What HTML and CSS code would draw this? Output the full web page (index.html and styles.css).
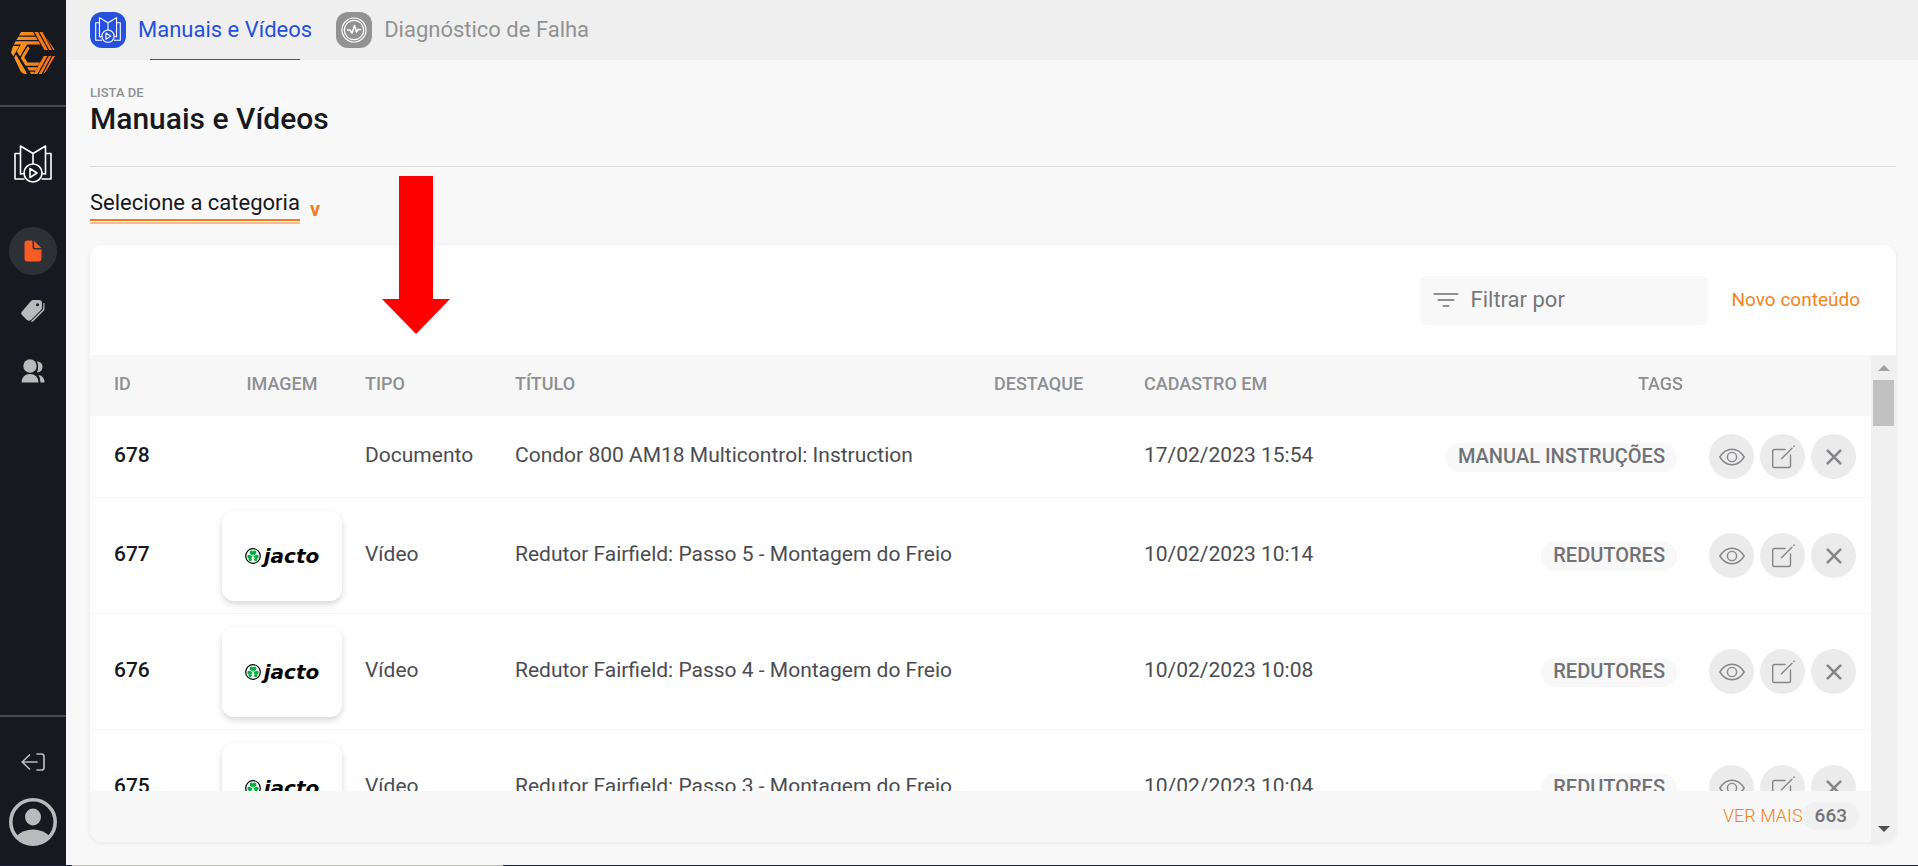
FILE: index.html
```html
<!DOCTYPE html>
<html lang="pt-BR">
<head>
<meta charset="utf-8">
<meta name="viewport" content="width=device-width, initial-scale=1">
<title>Manuais e Vídeos</title>
<link rel="stylesheet" href="styles.css">
</head>
<body>
<svg class="sprite" aria-hidden="true">
  <symbol id="book" viewBox="0 0 38 38" fill="none" stroke="currentColor" stroke-width="1.6" stroke-linejoin="round">
    <path d="M10.500 34H1V8.500H6.500M27.500 34H37V8.500H31.500M11 28.500C9 28.500 7.500 28.800 6.500 29V1L19 8.500L31.500 1V29C30 28.600 28.500 28.500 27.500 28.500M19 8.500V19"/>
    <circle cx="19" cy="28" r="9"/><path d="M16 23.500V32.500L23 28Z"/>
  </symbol>
  <symbol id="eye" viewBox="0 0 26 26" fill="none" stroke="currentColor" stroke-width="1.4">
    <path d="M.8 13C4 8 8 5.300 13 5.300S22 8 25.200 13C22 18 18 20.700 13 20.700S4 18 .8 13Z" stroke-linejoin="round"/><circle cx="13" cy="13" r="4.600"/>
  </symbol>
  <symbol id="edit" viewBox="0 0 26 26" fill="none" stroke="currentColor" stroke-width="1.400" stroke-linecap="round">
    <path d="M15 5.500H4.500Q2.700 5.500 2.700 7.300V21.700Q2.700 23.500 4.500 23.500H18.700Q20.500 23.500 20.500 21.700V11"/><path d="M11.500 14.800L22 4.300M23.900 2.400L24.200 2.100"/>
  </symbol>
  <symbol id="close" viewBox="0 0 26 26" fill="none" stroke="currentColor" stroke-width="2.600" stroke-linecap="round">
    <path d="M6.700 6.700L19.300 19.300M19.300 6.700L6.700 19.300"/>
  </symbol>
  <symbol id="clover" viewBox="0 0 16 16">
    <circle cx="8" cy="8" r="7.300" fill="#fff" stroke="#000" stroke-width="1.200"/>
    <path fill="#00b140" d="M8 8L4.600 5.600Q4.300 2.600 6.400 2.600Q8 2.600 8 3.800Q8 2.600 9.600 2.600Q11.700 2.600 11.400 5.600ZM7.600 8.200L6.800 12.400Q4.500 13.800 3.600 12Q3.400 10.800 4 10.600Q2.200 10.200 2.400 8Q2.800 6.200 5 7ZM8.400 8.200L9.200 12.400Q11.500 13.800 12.400 12Q12.600 10.800 12 10.600Q13.800 10.200 13.600 8Q13.200 6.200 11 7Z"/>
    <path d="M8 6.500V9.500M8 8L6.500 11M8 8L9.500 11" stroke="#fff" stroke-width=".7"/>
  </symbol>
</svg>
<div class="app">
  <aside class="sidebar">
    <a class="brand" href="#" aria-label="Início">
      <svg width="44" height="42" viewBox="0 0 44 42">
        <defs><linearGradient id="amber" gradientUnits="userSpaceOnUse" x1="0" y1="0" x2="44" y2="0"><stop offset="0" stop-color="#ff9a22"/><stop offset="1" stop-color="#f26a12"/></linearGradient></defs>
        <path fill="url(#amber)" d="M10 0H22L24 3.400H8ZM7.300 4.700H24.800L26.700 8H5.400ZM4.700 9.300H27.500L29.400 12.600H16L9 24.500L5.800 19.500L9.900 12.600H2.800ZM23.400 0H27L37 18H33.400ZM28.400 0H31.500L41 18H38.200ZM32.800 1.500L35 5.300L44 18H42.200ZM2 14H8.400L2.300 24.300L0 20.700ZM3.200 25.800L5 22.500L14.600 39L16 42H13L10 40ZM9.800 26L11.600 22.800L16.500 30.500H29L27.200 33.800H14.600ZM16 35.200H26.400L24.500 38.500H18ZM18.700 39.800H23.700L22.500 42H20ZM17 14L18.500 16.500L12.600 26.500L10.800 23.800ZM32.800 24H36.400L26.400 42H22.800ZM37.700 24H40.300L30.600 42H27.700ZM41.600 24H44L34.500 40L32 42Z"/>
      </svg>
    </a>
    <a class="module" href="#" aria-label="Manuais e Vídeos"><svg width="38" height="38"><use href="#book"/></svg></a>
    <nav class="side-nav" aria-label="Seções">
      <a class="side-link side-link-active" href="#" aria-label="Conteúdos">
        <svg width="24" height="24" viewBox="0 0 24 24" fill="currentColor"><path d="M6.500 1.500H11.500V8Q11.500 10.500 14 10.500H20.500V19.500Q20.500 22.500 17.500 22.500H6.500Q3.500 22.500 3.500 19.500V4.500Q3.500 1.500 6.500 1.500ZM13 1.800L20.300 9H14Q13 9 13 8Z"/></svg>
      </a>
      <a class="side-link" href="#" aria-label="Tags">
        <svg width="24" height="24" viewBox="0 0 24 24" fill="currentColor"><path fill-rule="evenodd" d="M12 1H18Q21 1 21 4V8.500Q21 10 20 11L10 21Q8 22.500 6 21L1 16Q-.5 14 1 12.500L10 2Q11 1 12 1ZM16.500 4.200A1.500 1.500 0 1 0 16.500 7.200A1.500 1.500 0 1 0 16.500 4.200Z"/><path d="M22.300 4H23.500V9.500Q23.500 11 22.500 12L12 22.500L10.500 23L10 22.300L21.400 11Q22.300 10 22.300 8.500Z"/></svg>
      </a>
      <a class="side-link" href="#" aria-label="Usuários">
        <svg width="24" height="24" viewBox="0 0 24 24" fill="currentColor"><circle cx="9" cy="7" r="6.700"/><path d="M.5 23.500Q1 15 9 15T17.500 23.500ZM16 2.200Q21.500 3 21.500 8T15.800 13.500Q18.500 8.500 16 2.200ZM17.500 16Q23.500 17 23.500 23.500H19.500Q19.500 19 17.500 16Z"/></svg>
      </a>
    </nav>
    <div class="account">
      <a class="side-link" href="#" aria-label="Sair">
        <svg width="24" height="24" viewBox="0 0 24 24" fill="none" stroke="currentColor" stroke-width="1.700" stroke-linecap="round" stroke-linejoin="round"><path d="M16 12H1.200M8.500 5L1.200 12L8.500 19M16 4H20.500Q23 4 23 6.500V17.500Q23 20 20.500 20H16"/></svg>
      </a>
      <a class="avatar" href="#" aria-label="Perfil">
        <svg width="48" height="48" viewBox="0 0 48 48"><circle cx="24" cy="24" r="22.200" fill="none" stroke="currentColor" stroke-width="3.600"/><ellipse cx="24" cy="19" rx="8" ry="8.500" fill="currentColor"/><path fill="currentColor" d="M7.500 38Q14 31.500 24 31.500T40.500 38Q34 46.500 24 46.500T7.500 38Z"/></svg>
      </a>
    </div>
  </aside>
  <div class="page">
    <nav class="tabs" aria-label="Módulos">
      <a class="tab tab-active" href="#"><span class="tab-icon"><svg width="26" height="26"><use href="#book"/></svg></span><span class="tab-label">Manuais e Vídeos</span></a>
      <a class="tab" href="#"><span class="tab-icon"><svg width="26" height="26" viewBox="0 0 26 26" fill="none" stroke="currentColor" stroke-width="1.200"><circle cx="13" cy="13" r="12"/><circle cx="13" cy="13" r="9.700"/><path stroke-width="1.600" stroke-linejoin="round" stroke-linecap="round" d="M6.500 13H9L11 16L13.500 8.500L15.500 15L17 12.500H19.500"/></svg></span><span class="tab-label">Diagnóstico de Falha</span></a>
    </nav>
    <main class="main">
      <header class="heading">
        <p class="eyebrow">LISTA DE</p>
        <h1 class="title">Manuais e Vídeos</h1>
      </header>
      <div class="category">
        <select class="category-select" aria-label="Categoria"><option>Selecione a categoria</option></select>
        <span class="category-caret" aria-hidden="true">v</span>
      </div>
      <section class="card">
        <div class="toolbar">
          <label class="filter">
            <svg width="26" height="18" viewBox="0 0 26 18" fill="none" stroke="currentColor" stroke-width="2" stroke-linecap="round"><path d="M1.500 3H24.500M5.500 9H20.500M10.500 15H15.500"/></svg>
            <input class="filter-input" type="text" placeholder="Filtrar por" aria-label="Filtrar por">
          </label>
          <a class="new-link" href="#">Novo conteúdo</a>
        </div>
        <div class="table-frame">
          <div class="table-area">
            <div class="table-scroll">
              <table class="table">
                <colgroup><col class="col-id"><col class="col-image"><col class="col-type"><col><col class="col-highlight"><col class="col-date"><col class="col-tags"><col class="col-actions"></colgroup>
                <thead><tr><th class="cell-id">ID</th><th class="cell-image">IMAGEM</th><th>TIPO</th><th>TÍTULO</th><th>DESTAQUE</th><th>CADASTRO EM</th><th class="cell-tags">TAGS</th><th aria-label="Ações"></th></tr></thead>
                <tbody>
                  <tr class="row-short"><td class="cell-id">678</td><td></td><td>Documento</td><td>Condor 800 AM18 Multicontrol: Instruction</td><td></td><td>17/02/2023 15:54</td><td class="cell-tags"><span class="tag">MANUAL INSTRUÇÕES</span></td>
                    <td class="cell-actions"><div class="actions"><button class="action" aria-label="Ver"><svg width="26" height="26"><use href="#eye"/></svg></button><button class="action" aria-label="Editar"><svg width="26" height="26"><use href="#edit"/></svg></button><button class="action" aria-label="Excluir"><svg width="26" height="26"><use href="#close"/></svg></button></div></td></tr>
                  <tr><td class="cell-id">677</td><td class="cell-image"><div class="thumb"><svg width="16" height="16"><use href="#clover"/></svg><span class="thumb-name">jacto</span></div></td><td>Vídeo</td><td>Redutor Fairfield: Passo 5 - Montagem do Freio</td><td></td><td>10/02/2023 10:14</td><td class="cell-tags"><span class="tag">REDUTORES</span></td>
                    <td class="cell-actions"><div class="actions"><button class="action" aria-label="Ver"><svg width="26" height="26"><use href="#eye"/></svg></button><button class="action" aria-label="Editar"><svg width="26" height="26"><use href="#edit"/></svg></button><button class="action" aria-label="Excluir"><svg width="26" height="26"><use href="#close"/></svg></button></div></td></tr>
                  <tr><td class="cell-id">676</td><td class="cell-image"><div class="thumb"><svg width="16" height="16"><use href="#clover"/></svg><span class="thumb-name">jacto</span></div></td><td>Vídeo</td><td>Redutor Fairfield: Passo 4 - Montagem do Freio</td><td></td><td>10/02/2023 10:08</td><td class="cell-tags"><span class="tag">REDUTORES</span></td>
                    <td class="cell-actions"><div class="actions"><button class="action" aria-label="Ver"><svg width="26" height="26"><use href="#eye"/></svg></button><button class="action" aria-label="Editar"><svg width="26" height="26"><use href="#edit"/></svg></button><button class="action" aria-label="Excluir"><svg width="26" height="26"><use href="#close"/></svg></button></div></td></tr>
                  <tr><td class="cell-id">675</td><td class="cell-image"><div class="thumb"><svg width="16" height="16"><use href="#clover"/></svg><span class="thumb-name">jacto</span></div></td><td>Vídeo</td><td>Redutor Fairfield: Passo 3 - Montagem do Freio</td><td></td><td>10/02/2023 10:04</td><td class="cell-tags"><span class="tag">REDUTORES</span></td>
                    <td class="cell-actions"><div class="actions"><button class="action" aria-label="Ver"><svg width="26" height="26"><use href="#eye"/></svg></button><button class="action" aria-label="Editar"><svg width="26" height="26"><use href="#edit"/></svg></button><button class="action" aria-label="Excluir"><svg width="26" height="26"><use href="#close"/></svg></button></div></td></tr>
                </tbody>
              </table>
            </div>
            <footer class="table-footer"><a class="more-link" href="#">VER MAIS</a><span class="more-count">663</span></footer>
          </div>
          <div class="scrollbar" aria-hidden="true"><span class="scroll-up"></span><span class="scroll-thumb"></span><span class="scroll-down"></span></div>
        </div>
      </section>
    </main>
  </div>
  <svg class="pointer" width="68" height="158" viewBox="0 0 68 158" aria-hidden="true"><path fill="#f00" d="M17 0H51V123H68L34 158L0 123H17Z"/></svg>
</div>
</body>
</html>
```
FILE: styles.css
```css
* { box-sizing: border-box; }

body {
  margin: 0;
  background: #f8f8f8;
  color: #4b4c51;
  font: 400 21px/28px Roboto, "Liberation Sans", sans-serif;
}

a { color: inherit; text-decoration: none; }
svg { display: block; flex: none; }
.sprite { position: absolute; width: 0; height: 0; }

.app {
  position: relative;
  display: flex;
  height: 100vh;
  overflow: hidden;
  padding-bottom: 1px;
  background: linear-gradient(90deg, #1b2440 72px, #bcbdbb 72px 503px, #1b2432 503px);
}

/* Sidebar */
.sidebar {
  flex: none;
  display: flex;
  flex-direction: column;
  width: 66px;
  background: #161920;
  color: #b9babc;
}
.brand {
  display: flex;
  justify-content: center;
  height: 107px;
  padding-top: 32px;
  border-bottom: 2px solid #47494d;
}
.module { display: flex; justify-content: center; padding-top: 38px; color: #fff; }
.side-nav { display: flex; flex-direction: column; align-items: center; gap: 12px; padding-top: 44px; }
.side-link { display: grid; place-items: center; width: 48px; height: 48px; border-radius: 50%; }
.side-link-active { background: #2d3034; color: #f65c23; }
.account {
  display: flex;
  flex-direction: column;
  align-items: center;
  gap: 12px;
  margin-top: auto;
  padding: 21px 0 19px;
  border-top: 2px solid #47494d;
}

/* Tabs */
.page { flex: 1; display: flex; flex-direction: column; min-width: 0; background: #f8f8f8; }
.tabs { flex: none; display: flex; gap: 24px; height: 60px; padding: 0 24px; background: #efefef; color: #929292; font-size: 22px; }
.tab { position: relative; display: flex; align-items: center; gap: 12px; }
.tab-active { color: #2650de; }
.tab-active::after { content: ""; position: absolute; bottom: 0; left: 60px; right: 12px; height: 1px; background: #2650de; }
.tab-icon { display: grid; place-items: center; width: 36px; height: 36px; border-radius: 12px; background: #929292; color: #fff; }
.tab-active .tab-icon { background: #2650de; }

/* Heading */
.main { flex: 1; display: flex; flex-direction: column; min-height: 0; padding: 24px 22px 23px 24px; }
.heading { padding-bottom: 30px; border-bottom: 1px solid #d9d9d9; }
.eyebrow { margin: 0; color: #8e8f93; font-size: 13px; font-weight: 500; line-height: 18px; }
.title { margin: 0; color: #161920; font-size: 30px; font-weight: 500; line-height: 34px; }
.category { display: flex; align-items: center; gap: 10px; padding: 18px 0 21px; }
.category-select {
  appearance: none;
  field-sizing: content;
  height: 39px;
  padding: 0 0 2px;
  border: 0;
  border-bottom: 2px solid #f0bd98;
  border-radius: 0;
  background: transparent;
  box-shadow: inset 0 -1px #f8f8f8, inset 0 -3px #f07a1e;
  color: #161920;
  font: inherit;
  font-size: 22px;
}
.category-caret { padding-top: 8px; color: #f47b20; font-size: 20px; font-weight: 700; line-height: 20px; }

/* Card */
.card {
  flex: 1;
  display: flex;
  flex-direction: column;
  min-height: 0;
  overflow: hidden;
  border-radius: 12px;
  background: #fff;
  box-shadow: 0 1px 4px rgba(0, 0, 0, .08);
}
.toolbar { flex: none; display: flex; align-items: center; justify-content: flex-end; gap: 24px; height: 110px; padding: 0 36px; }
.filter { display: flex; align-items: center; gap: 12px; width: 288px; height: 49px; padding: 0 13px; border-radius: 6px; background: #f8f8f8; color: #8e8f93; }
.filter-input { flex: 1; min-width: 0; padding: 0; border: 0; outline: 0; background: transparent; color: #4b4c51; font: inherit; font-size: 22px; }
.filter-input::placeholder { color: #77787b; }
.new-link { color: #f58220; font-size: 19px; }

.table-frame { flex: 1; display: flex; min-height: 0; }
.table-area { flex: 1; display: flex; flex-direction: column; min-width: 0; }
.table-scroll { flex: 1; min-height: 0; overflow: auto; scrollbar-width: none; }
.table { width: 100%; table-layout: fixed; border-collapse: separate; border-spacing: 0; }
.col-id { width: 109px; }
.col-image { width: 166px; }
.col-type { width: 150px; }
.col-highlight { width: 150px; }
.col-date { width: 256px; }
.col-tags { width: 283px; }
.col-actions { width: 188px; }
th { position: sticky; top: 0; height: 61px; padding: 0 0 4px; background: #f7f7f7; color: #8e8f93; font-size: 18px; font-weight: 500; text-align: left; }
td { height: 116px; padding: 0 0 4px; border-bottom: 1px solid #f5f5f5; white-space: nowrap; }
.row-short td { height: 82px; }
.table .cell-id { padding-left: 24px; }
td.cell-id { color: #161920; font-weight: 500; }
.cell-image { text-align: center; }
td.cell-image, td.cell-actions { padding: 0; }
.cell-tags { text-align: right; }
td.cell-tags { padding: 0 6px 0 0; }
.tag { display: inline-block; padding: 0 12px 2px; border-radius: 15px; background: #f8f8f8; color: #717277; font-size: 20px; font-weight: 500; line-height: 27px; }
.thumb { display: flex; align-items: center; justify-content: center; gap: 3px; width: 120px; height: 90px; margin: 0 auto; border-radius: 12px; background: #fff; box-shadow: 0 3px 6px rgba(0, 0, 0, .16); }
.thumb-name { color: #000; font-family: "DejaVu Sans", sans-serif; font-size: 20px; font-style: italic; font-weight: 700; line-height: 24px; }
.actions { display: flex; gap: 6px; padding-left: 26px; }
.action { display: grid; place-items: center; width: 45px; height: 45px; padding: 0; border: 0; border-radius: 50%; background: #ebebeb; color: #85868a; }
.table-footer { flex: none; display: flex; align-items: center; justify-content: flex-end; height: 51px; padding: 0 12px 2px; background: #f7f7f7; font-size: 18px; }
.more-link { color: #f58220; font-weight: 300; }
.more-count { padding: 0 12px; border-radius: 14px; background: #f0f0f0; color: #717277; font-size: 19px; font-weight: 500; }

.scrollbar { flex: none; display: flex; flex-direction: column; align-items: center; width: 25px; padding: 10px 0; background: #f0f0f0; }
.scroll-up { border: 6px solid transparent; border-top: 0; border-bottom-color: #a3a3a3; }
.scroll-thumb { width: 21px; height: 46px; margin-top: 9px; background: #c1c1c1; }
.scroll-down { margin-top: auto; border: 6px solid transparent; border-bottom: 0; border-top-color: #505050; }

/* Pointer over the column header */
.pointer { position: absolute; top: 176px; left: 382px; }
```
